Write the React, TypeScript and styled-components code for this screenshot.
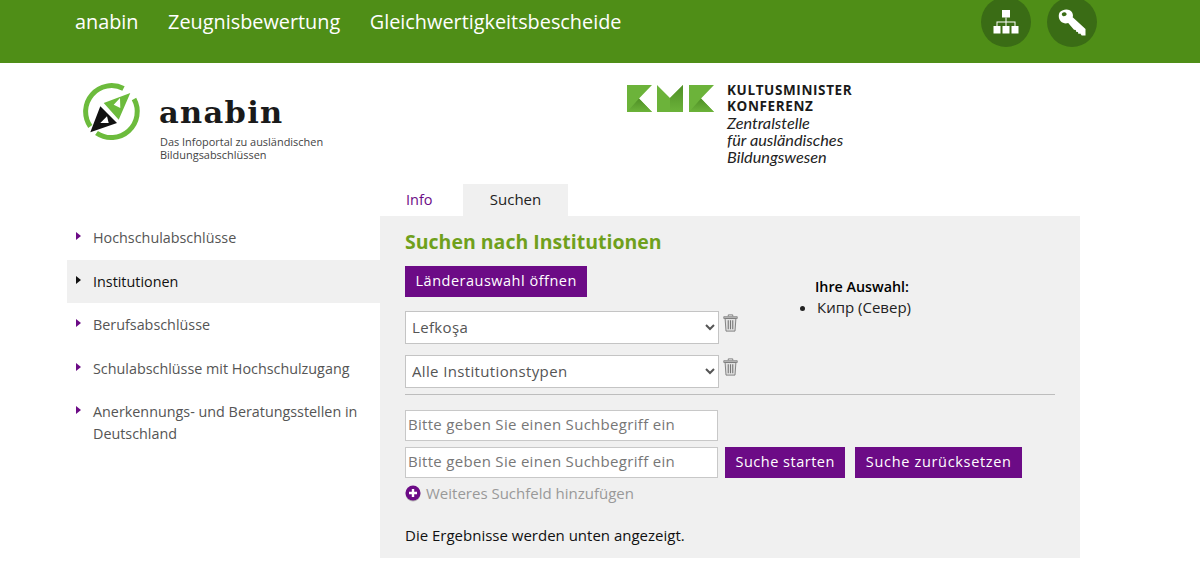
import React from "react";
import styled, { createGlobalStyle } from "styled-components";

const Global = createGlobalStyle`
  html, body { margin: 0; padding: 0; background: #fff; }
  body { font-family: "Open Sans", "Liberation Sans", sans-serif; color: #000; }
  * { box-sizing: border-box; }
`;

const purple = "#6c0b86";

const TopBar = styled.header`
  height: 63px;
  background: #4f8e17;
  display: flex;
  justify-content: space-between;
  padding: 0 103px 0 75px;
`;

const TopLinks = styled.nav`
  display: flex;
  gap: 29.500px;
  padding-top: 7px;
`;

const TopLink = styled.a`
  color: #fff;
  font-size: 19.850px;
  line-height: 30px;
  text-decoration: none;
`;

const RoundButtons = styled.div`
  display: flex;
  gap: 16px;
  margin-top: -3px;
`;

const RoundButton = styled.a`
  width: 50px;
  height: 50px;
  border-radius: 50%;
  background: #3a6c15;
  display: flex;
  align-items: center;
  justify-content: center;
`;

const Page = styled.div`
  width: 1013px;
  margin-left: 67px;
`;

const LogoRow = styled.div`
  height: 121px;
  display: flex;
`;

const AnabinLogo = styled.div`
  width: 560px;
  display: flex;
  padding: 20px 0 0 15px;
`;

const AnabinText = styled.div`
  margin-left: 17px;
  padding-top: 11px;
`;

const AnabinName = styled.div`
  font-family: "DejaVu Serif", serif;
  font-weight: 700;
  font-size: 30.500px;
  line-height: 36px;
  letter-spacing: 1.300px;
  color: #1a1a1a;
`;

const AnabinClaim = styled.div`
  margin-top: 5px;
  margin-left: 1px;
  font-size: 10.950px;
  line-height: 13px;
  color: #444;
`;

const KmkLogo = styled.div`
  display: flex;
  gap: 12px;
  padding-top: 19px;
`;

const KmkMarkBox = styled.div`
  padding-top: 3px;
`;

const KmkName = styled.div`
  font-family: "Open Sans", sans-serif;
  font-weight: 700;
  font-size: 13.500px;
  line-height: 16px;
  letter-spacing: 0.620px;
  color: #1a1a1a;
`;

const KmkSub = styled.div`
  font-family: Lato, "Noto Sans", sans-serif;
  font-style: italic;
  font-size: 16.300px;
  line-height: 17px;
  color: #222;
`;

const Tabs = styled.div`
  height: 32px;
  display: flex;
  margin-left: 313px;
`;

const Tab = styled.a<{ $active?: boolean }>`
  width: ${(p) => (p.$active ? "105px" : "83px")};
  padding-left: ${(p) => (p.$active ? "0" : "26px")};
  text-align: ${(p) => (p.$active ? "center" : "left")};
  background: ${(p) => (p.$active ? "#f0f0f0" : "transparent")};
  color: ${(p) => (p.$active ? "#222" : purple)};
  font-size: ${(p) => (p.$active ? "15px" : "14.500px")};
  line-height: 31px;
`;

const Main = styled.div`
  display: flex;
  align-items: flex-start;
`;

const Sidebar = styled.ul`
  width: 313px;
  list-style: none;
  margin: 0;
  padding: 0.300px 0 0;
`;

const SideItem = styled.li<{ $active?: boolean }>`
  position: relative;
  padding: 11px 20px 10.500px 26px;
  font-size: 14.350px;
  line-height: 22px;
  color: ${(p) => (p.$active ? "#111" : "#555")};
  background: ${(p) => (p.$active ? "#f0f0f0" : "transparent")};

  &::before {
    content: "";
    position: absolute;
    left: 9px;
    top: 16px;
    border-left: 5px solid ${(p) => (p.$active ? "#111" : purple)};
    border-top: 4.500px solid transparent;
    border-bottom: 4.500px solid transparent;
  }
`;

const Panel = styled.section`
  width: 700px;
  height: 342px;
  background: #f0f0f0;
  padding: 12px 25px 0;
`;

const Title = styled.h2`
  margin: 0;
  color: #6fa01c;
  font-size: 19.500px;
  line-height: 27px;
  font-weight: 700;
`;

const FilterGrid = styled.div`
  display: flex;
  margin-top: 11px;
`;

const FilterColumn = styled.div`
  width: 410px;
`;

const PurpleButton = styled.button`
  height: 31px;
  padding: 0 10.500px 2px;
  border: 0;
  background: ${purple};
  color: #fff;
  font-family: "Open Sans", sans-serif;
  font-size: 14.500px;
  font-weight: 500;
  letter-spacing: 0.500px;
`;

const SelectRow = styled.div`
  display: flex;
  align-items: flex-start;
  gap: 3px;
  margin-top: 11px;
  &:first-of-type {
    margin-top: 14px;
  }
`;

const Select = styled.select`
  width: 314px;
  height: 33px;
  padding: 0 2px 2px;
  background: #fff;
  border: 1px solid #c4c4c4;
  border-radius: 0;
  color: #555;
  font-family: "Open Sans", sans-serif;
  font-size: 15px;
  letter-spacing: 0.350px;
`;

const Choice = styled.div`
  padding-top: 10px;
  font-size: 14.300px;
  line-height: 22px;
`;

const ChoiceTitle = styled.div`
  font-weight: 600;
`;

const ChoiceList = styled.ul`
  margin: -2px 0 0;
  padding-left: 2px;
  font-size: 15px;
  color: #222;
`;

const Divider = styled.hr`
  margin: 6px 0 15px;
  border: 0;
  border-top: 1px solid #bdbdbd;
`;

const SearchRow = styled.div`
  display: flex;
  margin-bottom: 6px;
`;

const SearchInput = styled.input`
  width: 313px;
  height: 31px;
  padding: 0 2px 3px;
  border: 1px solid #c8c8c8;
  background: #fff;
  font-family: "Open Sans", sans-serif;
  font-size: 15px;
  letter-spacing: 0.300px;

  &::placeholder {
    color: #777;
    opacity: 1;
  }
`;

const SearchButton = styled(PurpleButton)<{ $spacing: number }>`
  margin-left: 7px;
  letter-spacing: ${(p) => p.$spacing}px;
  & + & {
    margin-left: 10px;
  }
`;

const AddField = styled.a`
  display: flex;
  align-items: center;
  gap: 5px;
  margin-top: -2px;
  color: #999;
  font-size: 15px;
  line-height: 22px;
`;

const ResultNote = styled.p`
  margin: 20px 0 0;
  font-size: 15px;
  line-height: 22px;
  color: #111;
`;

const TrashBox = styled.span`
  display: block;
  padding-top: 3px;
  line-height: 0;
`;

const SitemapIcon = () => (
  <svg width="26" height="24" viewBox="0 0 26 24" fill="#fff">
    <rect x="9" y="0" width="8" height="7.5" />
    <rect x="0.5" y="16" width="7" height="7.5" />
    <rect x="9.5" y="16" width="7" height="7.5" />
    <rect x="18.5" y="16" width="7" height="7.5" />
    <path d="M12.5 7.5h1v4h9v4.5h-1v-3.5h-8v3.5h-1v-3.5h-8v3.5h-1v-4.5h9z" />
  </svg>
);

const KeyIcon = () => (
  <svg width="28" height="27" viewBox="0 0 28 27">
    <path
      fillRule="evenodd"
      fill="#fff"
      d="M2 3C4.500.3 9-.4 11.800 1.300c2.600 1.600 3.700 4.400 2.900 6.900L27.500 20v6.500h-3.800l-1.500-1.900-1.600.3-.7-2-1.800-.1-.3-1.800-1.800-.3L10.200 14c-2.800.9-5.500.2-7.500-1.700C.3 10 .2 5.200 2 3zM4.300 3.900c-.9 1-.6 2.500.6 3.100 1.300.6 3.200-.1 3.600-1.200.4-1.200-.5-2.400-1.800-2.600-1-.1-1.900.1-2.400.7z"
    />
  </svg>
);

const CompassLogo = () => (
  <svg width="60" height="60" viewBox="0 0 60 60">
    <path
      d="M8.300 43.500A26 26 0 0 1 41.500 5.500"
      fill="none"
      stroke="#6cbb3c"
      strokeWidth="5"
    />
    <path
      d="M52 16A26 26 0 0 1 14.500 50"
      fill="none"
      stroke="#6cbb3c"
      strokeWidth="5"
    />
    <path
      fillRule="evenodd"
      fill="#6cbb3c"
      d="M48.300 10L36.700 36.700 21.700 20zM38 15l-6.300 6.700 6.600 3.300z"
    />
    <path
      fillRule="evenodd"
      fill="#111"
      d="M8.300 49.300L18.300 23.300 35 40zM18.300 40L25 33.300 26.700 40z"
    />
  </svg>
);

const KmkMark = () => (
  <svg width="88" height="27" viewBox="0 0 88 27">
    <defs>
      <linearGradient id="kmkShade" x1="0" y1="0" x2="0" y2="1">
        <stop offset="0" stopColor="#4f8f26" />
        <stop offset="1" stopColor="#6cb33a" />
      </linearGradient>
    </defs>
    <path fill="#6cb33a" d="M0 0h25L12 13.500 25 27H0z" />
    <path fill="url(#kmkShade)" d="M0 27l12-13.500L25 27z" />
    <path fill="#6cb33a" d="M30 0l13 13 13-13v27H30z" />
    <path fill="url(#kmkShade)" d="M43 13l13-13v27H43z" />
    <path fill="#6cb33a" d="M62 0h25L74 13.500 87 27H62z" />
    <path fill="url(#kmkShade)" d="M62 27l12-13.500L87 27z" />
  </svg>
);

const TrashIcon = () => (
  <TrashBox>
    <svg width="17" height="18" viewBox="0 0 18 20">
      <path d="M6.500 2.500V1h5v1.500" fill="none" stroke="#777" />
      <path d="M1.500 3h15v2h-15z" fill="#bbb" stroke="#777" strokeWidth="0.800" />
      <path d="M3 5h12l-1 14H4z" fill="#e2e2e2" stroke="#777" />
      <path d="M6.500 7v10M9 7v10M11.500 7v10" stroke="#777" strokeWidth="1.200" />
    </svg>
  </TrashBox>
);

const PlusIcon = () => (
  <svg width="16" height="17" viewBox="0 0 16 17">
    <circle cx="8" cy="9" r="7.500" fill="#444" opacity="0.35" />
    <circle cx="8" cy="8" r="7.500" fill={purple} />
    <path d="M8 4v8M4 8h8" stroke="#fff" strokeWidth="2.400" />
  </svg>
);

const sideItems = [
  "Hochschulabschlüsse",
  "Institutionen",
  "Berufsabschlüsse",
  "Schulabschlüsse mit Hochschulzugang",
  "Anerkennungs- und Beratungsstellen in Deutschland",
];

export default function App() {
  return (
    <>
      <Global />
      <TopBar>
        <TopLinks>
          <TopLink>anabin</TopLink>
          <TopLink>Zeugnisbewertung</TopLink>
          <TopLink>Gleichwertigkeitsbescheide</TopLink>
        </TopLinks>
        <RoundButtons>
          <RoundButton>
            <SitemapIcon />
          </RoundButton>
          <RoundButton>
            <KeyIcon />
          </RoundButton>
        </RoundButtons>
      </TopBar>
      <Page>
        <LogoRow>
          <AnabinLogo>
            <CompassLogo />
            <AnabinText>
              <AnabinName>anabin</AnabinName>
              <AnabinClaim>
                Das Infoportal zu ausländischen
                <br />
                Bildungsabschlüssen
              </AnabinClaim>
            </AnabinText>
          </AnabinLogo>
          <KmkLogo>
            <KmkMarkBox>
              <KmkMark />
            </KmkMarkBox>
            <div>
              <KmkName>
                KULTUSMINISTER
                <br />
                KONFERENZ
              </KmkName>
              <KmkSub>
                Zentralstelle
                <br />
                für ausländisches
                <br />
                Bildungswesen
              </KmkSub>
            </div>
          </KmkLogo>
        </LogoRow>
        <Tabs>
          <Tab>Info</Tab>
          <Tab $active>Suchen</Tab>
        </Tabs>
        <Main>
          <Sidebar>
            {sideItems.map((item) => (
              <SideItem key={item} $active={item === "Institutionen"}>
                {item}
              </SideItem>
            ))}
          </Sidebar>
          <Panel>
            <Title>Suchen nach Institutionen</Title>
            <FilterGrid>
              <FilterColumn>
                <PurpleButton>Länderauswahl öffnen</PurpleButton>
                <SelectRow>
                  <Select defaultValue="Lefkoşa">
                    <option>Lefkoşa</option>
                  </Select>
                  <TrashIcon />
                </SelectRow>
                <SelectRow>
                  <Select defaultValue="Alle Institutionstypen">
                    <option>Alle Institutionstypen</option>
                  </Select>
                  <TrashIcon />
                </SelectRow>
              </FilterColumn>
              <Choice>
                <ChoiceTitle>Ihre Auswahl:</ChoiceTitle>
                <ChoiceList>
                  <li>Кипр (Север)</li>
                </ChoiceList>
              </Choice>
            </FilterGrid>
            <Divider />
            <SearchRow>
              <SearchInput placeholder="Bitte geben Sie einen Suchbegriff ein" />
            </SearchRow>
            <SearchRow>
              <SearchInput placeholder="Bitte geben Sie einen Suchbegriff ein" />
              <SearchButton $spacing={0.5}>Suche starten</SearchButton>
              <SearchButton $spacing={0.67}>Suche zurücksetzen</SearchButton>
            </SearchRow>
            <AddField>
              <PlusIcon />
              Weiteres Suchfeld hinzufügen
            </AddField>
            <ResultNote>Die Ergebnisse werden unten angezeigt.</ResultNote>
          </Panel>
        </Main>
      </Page>
    </>
  );
}
